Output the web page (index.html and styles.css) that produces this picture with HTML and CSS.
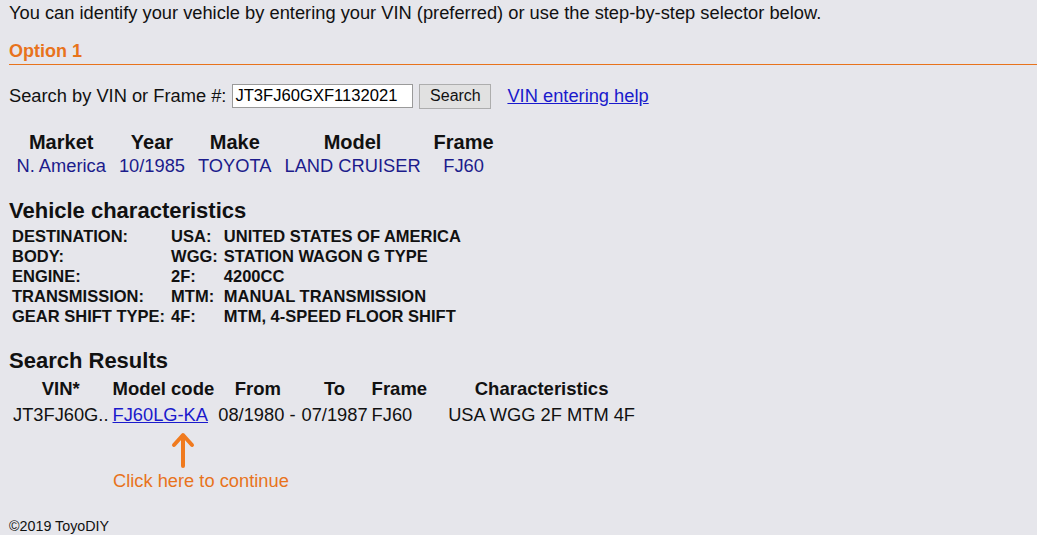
FILE: index.html
```html
<!DOCTYPE html>
<html>
<head>
<meta charset="utf-8">
<link rel="stylesheet" href="styles.css">
</head>
<body>
<p class="intro">You can identify your vehicle by entering your VIN (preferred) or use the step-by-step selector below.</p>
<h3 class="option">Option 1</h3>
<form class="search">
  <label>Search by VIN or Frame #:</label>
  <input class="vin" type="text" value="JT3FJ60GXF1132021">
  <button class="btn" type="button">Search</button>
  <a class="help" href="#">VIN entering help</a>
</form>
<table class="summary">
  <tr><th>Market</th><th>Year</th><th>Make</th><th>Model</th><th>Frame</th></tr>
  <tr><td>N. America</td><td>10/1985</td><td>TOYOTA</td><td>LAND CRUISER</td><td>FJ60</td></tr>
</table>
<h2 class="sect">Vehicle characteristics</h2>
<table class="chars">
  <tr><td>DESTINATION:</td><td>USA:</td><td>UNITED STATES OF AMERICA</td></tr>
  <tr><td>BODY:</td><td>WGG:</td><td>STATION WAGON G TYPE</td></tr>
  <tr><td>ENGINE:</td><td>2F:</td><td>4200CC</td></tr>
  <tr><td>TRANSMISSION:</td><td>MTM:</td><td>MANUAL TRANSMISSION</td></tr>
  <tr><td>GEAR SHIFT TYPE:</td><td>4F:</td><td>MTM, 4-SPEED FLOOR SHIFT</td></tr>
</table>
<h2 class="sect results-title">Search Results</h2>
<table class="results">
  <tr><th>VIN*</th><th>Model code</th><th>From</th><th>To</th><th>Frame</th><th class="ch">Characteristics</th></tr>
  <tr><td>JT3FJ60G..</td><td><a href="#">FJ60LG-KA</a></td><td class="from">08/1980 -</td><td>07/1987</td><td>FJ60</td><td class="ch">USA WGG 2F MTM 4F</td></tr>
</table>
<div class="hint">
  <svg class="arrow" width="24" height="36" viewBox="0 0 24 36"><path d="M12 34 V4 M3 13 L12 3 L21 13" fill="none" stroke="#f07a1e" stroke-width="4" stroke-linecap="round" stroke-linejoin="round"/></svg>
  <div class="hint-text">Click here to continue</div>
</div>
<footer class="foot">©2019 ToyoDIY</footer>
</body>
</html>
```
FILE: styles.css
```css
html, body { margin: 0; padding: 0; }
body {
  background: #e6e6eb;
  font-family: "Liberation Sans", Arial, sans-serif;
  color: #111;
  padding: 0 0 0 9px;
  font-size: 18.3px;
}
.intro { margin: 0; padding-top: 2px; line-height: 21px; }
.option {
  margin: 18px 0 0 0;
  font-size: 18px;
  color: #e8731c;
  font-weight: bold;
  line-height: 20px;
  padding-bottom: 3px;
  border-bottom: 1px solid #e8731c;
}
.search { display: flex; align-items: center; margin-top: 18px; height: 26px; }
.search label { margin-right: 6px; }
.vin {
  font-family: "Liberation Sans", Arial, sans-serif;
  font-size: 16.6px;
  width: 181px;
  height: 24px;
  box-sizing: border-box;
  border: 1px solid #9a9a9a;
  padding: 0 2px;
  margin: 0;
  background: #fff;
  color: #000;
}
.btn {
  margin-left: 6px;
  height: 25px;
  width: 72px;
  font-family: "Liberation Sans", Arial, sans-serif;
  font-size: 16px;
  background: #e1e1e1;
  border: 1px solid #adadad;
  color: #111;
  padding: 0;
}
.help { margin-left: 16px; color: #1a1acc; }
.summary { border-collapse: collapse; margin-top: 22px; margin-left: 1px; }
.summary th { font-size: 20px; padding: 0 6.5px; line-height: 23px; text-align: center; }
.summary td { font-size: 18.3px; color: #1c1c8c; padding: 0 6.5px; line-height: 23px; text-align: center; }
.sect { font-size: 22px; margin: 21px 0 0 0; line-height: 25px; }
.chars { border-collapse: collapse; margin-top: 3px; margin-left: 3px; }
.chars td { font-size: 16.5px; font-weight: bold; padding: 0 6px 0 0; line-height: 20px; white-space: nowrap; }
.results-title { margin-top: 22px; }
.results { border-collapse: collapse; margin-top: 3px; margin-left: 2px; }
.results th { font-size: 18.5px; padding: 0 2px; line-height: 26px; text-align: center; }
.results td { font-size: 18.3px; padding: 0 2px; line-height: 26px; text-align: left; white-space: nowrap; }
.results td.from { padding-right: 4px; }
.results .ch { padding-left: 19px; padding-right: 19px; text-align: center; }
.results a { color: #1a1acc; }
.hint { margin-left: 104px; margin-top: 4px; display: flex; flex-direction: column; align-items: flex-start; }
.arrow { margin-left: 58px; display: block; }
.hint-text { color: #e8731c; margin-top: 2px; line-height: 21px; }
.foot { font-size: 14.3px; margin-top: 27px; line-height: 16px; }
```
